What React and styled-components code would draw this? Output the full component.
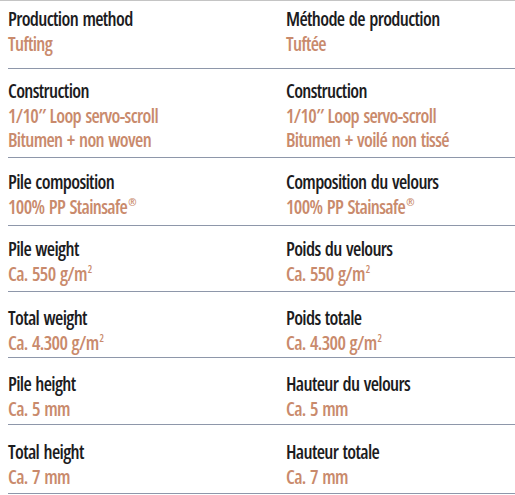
import styled, { createGlobalStyle } from "styled-components";

const Global = createGlobalStyle`
  body {
    margin: 0;
    background: #ffffff;
    overflow: hidden;
  }
`;

const Sheet = styled.div`
  width: 515px;
  height: 495px;
  overflow: hidden;
  padding-left: 8px;
  box-sizing: border-box;
  border-top: 1px solid #c4c4c4;
  font-family: "Open Sans", "DejaVu Sans", sans-serif;
  font-stretch: 75%;
`;

const Row = styled.div`
  display: grid;
  grid-template-columns: 278px 1fr;
  align-items: start;
  box-sizing: border-box;
  height: ${(p) => p.$h}px;
  padding-top: ${(p) => p.$top}px;
  border-bottom: 1px solid #8e97aa;
`;

const Cell = styled.div`
  display: flex;
  flex-direction: column;
  white-space: nowrap;
`;

const Label = styled.div`
  font-size: 19px;
  line-height: 24.5px;
  color: #1c1c1e;
  font-weight: 600;
  letter-spacing: -0.65px;
  word-spacing: 1.5px;
`;

const Value = styled(Label)`
  color: #c98a6c;
`;

const Sup = styled.sup`
  font-size: 10px;
  line-height: 0;
  vertical-align: 8px;
  margin-left: 1px;
`;

const m2 = (v) => (
  <>
    {v} g/m<Sup>2</Sup>
  </>
);

const stainsafe = (
  <>
    100% PP Stainsafe<Sup>®</Sup>
  </>
);

const rows = [
  { h: 68, top: 6, en: "Production method", enVals: ["Tufting"], fr: "Méthode de production", frVals: ["Tuftée"] },
  {
    h: 89,
    top: 10,
    en: "Construction",
    enVals: ["1/10″ Loop servo-scroll", "Bitumen + non woven"],
    fr: "Construction",
    frVals: ["1/10″ Loop servo-scroll", "Bitumen + voilé non tissé"],
  },
  { h: 68, top: 12, en: "Pile composition", enVals: [stainsafe], fr: "Composition du velours", frVals: [stainsafe] },
  { h: 66, top: 11, en: "Pile weight", enVals: [m2("Ca. 550")], fr: "Poids du velours", frVals: [m2("Ca. 550")] },
  { h: 66, top: 14, en: "Total weight", enVals: [m2("Ca. 4.300")], fr: "Poids totale", frVals: [m2("Ca. 4.300")] },
  { h: 67, top: 14, en: "Pile height", enVals: ["Ca. 5 mm"], fr: "Hauteur du velours", frVals: ["Ca. 5 mm"] },
  { h: 69, top: 15, en: "Total height", enVals: ["Ca. 7 mm"], fr: "Hauteur totale", frVals: ["Ca. 7 mm"] },
];

export default function App() {
  return (
    <>
      <Global />
      <Sheet>
        {rows.map((r, i) => (
          <Row key={i} $h={r.h} $top={r.top}>
            <Cell>
              <Label>{r.en}</Label>
              {r.enVals.map((v, j) => (
                <Value key={j}>{v}</Value>
              ))}
            </Cell>
            <Cell>
              <Label>{r.fr}</Label>
              {r.frVals.map((v, j) => (
                <Value key={j}>{v}</Value>
              ))}
            </Cell>
          </Row>
        ))}
      </Sheet>
    </>
  );
}
